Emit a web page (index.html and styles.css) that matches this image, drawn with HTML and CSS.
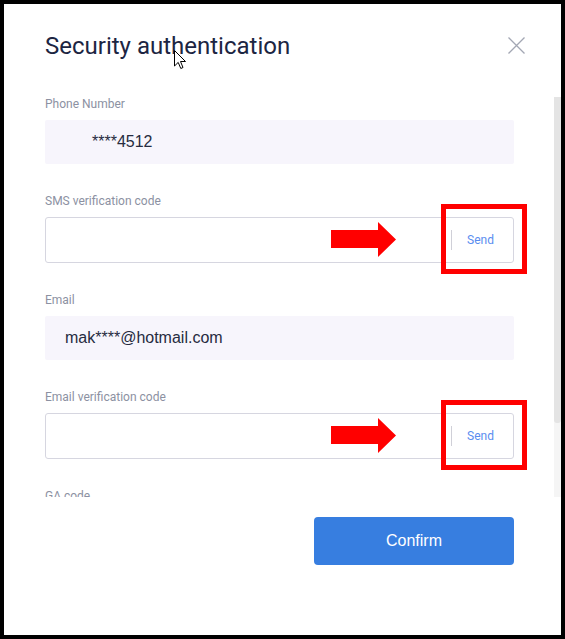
FILE: index.html
```html
<!DOCTYPE html>
<html lang="en">
<head>
<meta charset="utf-8">
<title>Security authentication</title>
<link rel="stylesheet" href="styles.css">
</head>
<body>
<div class="modal">
  <div class="header">
    <h1 class="title">Security authentication</h1>
    <button class="close" aria-label="Close">
      <svg width="17" height="17" viewBox="0 0 17 17"><path d="M0.5 0.5 L16.5 16.5 M16.5 0.5 L0.5 16.5" stroke="#a3a7b3" stroke-width="1.3" fill="none"/></svg>
    </button>
  </div>

  <div class="body">
    <div class="form">
      <div class="item">
        <div class="label">Phone Number</div>
        <div class="readonly"><span class="phone">****4512</span></div>
      </div>
      <div class="item">
        <div class="label">SMS verification code</div>
        <div class="field">
          <input class="code" type="text">
          <span class="send">Send</span>
          <svg class="arrow" width="65" height="35" viewBox="0 0 65 35"><path d="M0 8 H47 V0 L65 17.5 L47 35 V26 H0 Z" fill="#ff0000"/></svg>
          <span class="mark"></span>
        </div>
      </div>
      <div class="item">
        <div class="label">Email</div>
        <div class="readonly"><span class="email">mak****@hotmail.com</span></div>
      </div>
      <div class="item">
        <div class="label">Email verification code</div>
        <div class="field">
          <input class="code" type="text">
          <span class="send">Send</span>
          <svg class="arrow" width="65" height="35" viewBox="0 0 65 35"><path d="M0 8 H47 V0 L65 17.5 L47 35 V26 H0 Z" fill="#ff0000"/></svg>
          <span class="mark"></span>
        </div>
      </div>
      <div class="item">
        <div class="label">GA code</div>
        <div class="field">
          <input class="code" type="text">
        </div>
      </div>
    </div>
    <div class="scrollbar"><div class="thumb"></div></div>
  </div>

  <div class="footer">
    <button class="confirm">Confirm</button>
  </div>

  <svg class="cursor" width="13" height="20" viewBox="0 0 13 20"><path d="M0.5 0.5 V16 L4.2 12.4 L6.8 18.5 L9 17.5 L6.5 11.5 H11.5 Z" fill="#fff" stroke="#000" stroke-width="1" stroke-linejoin="miter"/></svg>
</div>
</body>
</html>
```

FILE: styles.css
```css
* { box-sizing: border-box; }

html, body {
  margin: 0;
  padding: 0;
}

body {
  background: #000;
  width: 565px;
  height: 639px;
  padding: 4px;
  overflow: hidden;
}

.modal {
  position: relative;
  width: 557px;
  height: 631px;
  background: #fff;
  display: flex;
  flex-direction: column;
}

.header {
  display: flex;
  align-items: center;
  justify-content: space-between;
  padding: 26px 36px 0 41px;
}

.title {
  margin: 0;
  font-family: Roboto, "Liberation Sans", sans-serif;
  font-weight: 400;
  font-size: 24px;
  line-height: 32px;
  color: #1c2542;
}

.close {
  width: 17px;
  height: 17px;
  padding: 0;
  border: 0;
  background: none;
  display: block;
  margin-top: -2px;
}
.close svg { display: block; }

.body {
  margin-top: 23px;
  height: 412px;
  display: flex;
  overflow: hidden;
  padding-left: 41px;
}

.form {
  width: 469px;
  flex: none;
  padding-top: 11px;
  display: flex;
  flex-direction: column;
  gap: 29px;
}

.label {
  font-family: Roboto, "Liberation Sans", sans-serif;
  font-size: 12px;
  line-height: 16px;
  color: #8c91a2;
  margin-bottom: 8px;
}

.readonly {
  height: 44px;
  background: #f7f5fc;
  border-radius: 2px;
  display: flex;
  align-items: center;
  padding-left: 20px;
  font-family: "Liberation Sans", Arial, sans-serif;
  font-size: 16px;
  color: #262b40;
}

.phone { margin-left: 27px; }

.field {
  position: relative;
  height: 46px;
  border: 1px solid #d6d6e0;
  border-radius: 3px;
  display: flex;
  align-items: center;
}

.code {
  flex: 1;
  height: 100%;
  border: 0;
  outline: none;
  background: transparent;
  padding: 0 12px;
  min-width: 0;
}

.send {
  flex: none;
  width: 62px;
  height: 20px;
  border-left: 1px solid #d0d0d8;
  display: flex;
  align-items: center;
  justify-content: center;
  font-family: Roboto, "Liberation Sans", sans-serif;
  font-size: 12px;
  color: #5a8def;
  padding-right: 4px;
}

.arrow {
  position: absolute;
  left: 285px;
  top: 4px;
  display: block;
}

.mark {
  position: absolute;
  left: 395px;
  top: -14px;
  width: 86px;
  height: 70px;
  border: 5px solid #ff0000;
}

.scrollbar {
  flex: none;
  width: 7px;
  margin-left: 40px;
  margin-top: 12px;
  height: 400px;
  background: #f5f5f5;
}

.thumb {
  height: 326px;
  background: #e4e4e4;
  border-radius: 0 0 3px 3px;
}

.footer {
  display: flex;
  justify-content: flex-end;
  padding-right: 47px;
  margin-top: 20px;
}

.confirm {
  width: 200px;
  height: 48px;
  border: 0;
  border-radius: 4px;
  background: #377ee0;
  color: #fff;
  font-family: "Liberation Sans", Arial, sans-serif;
  font-size: 16px;
}

.cursor {
  position: absolute;
  left: 170px;
  top: 46px;
  display: block;
}
```
